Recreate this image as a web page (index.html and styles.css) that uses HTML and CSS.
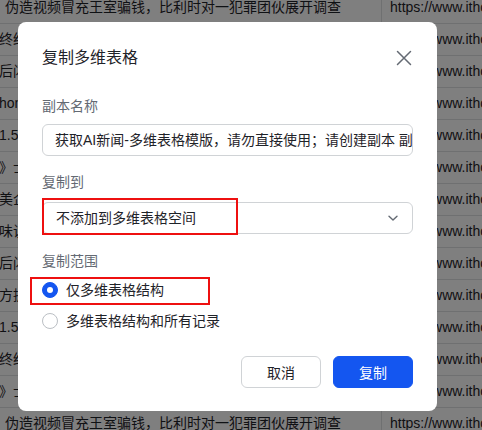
FILE: index.html
```html
<!DOCTYPE html>
<html lang="zh-CN">
<head>
    <meta charset="UTF-8">
    <meta name="viewport" content="width=device-width, initial-scale=1.0">
    <title>复制多维表格</title>
    <link rel="stylesheet" href="styles.css">
</head>
<body>
    <!-- Table behind the modal -->
    <div class="sheet">
        <div class="row"><div class="cell-title">伪造视频冒充王室骗钱，比利时对一犯罪团伙展开调查</div><div class="cell-link">https://www.ithome.com/0/812/331.htm</div></div>
        <div class="row"><div class="cell-title cut">终结者系列新作官宣定档</div><div class="cell-link">https://www.ithome.com/0/812/330.htm</div></div>
        <div class="row"><div class="cell-title cut">后闪存时代的存储技术</div><div class="cell-link">https://www.ithome.com/0/812/329.htm</div></div>
        <div class="row"><div class="cell-title cut">honor 新机发布会</div><div class="cell-link">https://www.ithome.com/0/812/328.htm</div></div>
        <div class="row"><div class="cell-title cut">1.5 亿元融资完成</div><div class="cell-link">https://www.ithome.com/0/812/327.htm</div></div>
        <div class="row"><div class="cell-title cut">》士兵突击重映</div><div class="cell-link">https://www.ithome.com/0/812/326.htm</div></div>
        <div class="row"><div class="cell-title cut">美企财报季来临</div><div class="cell-link">https://www.ithome.com/0/812/325.htm</div></div>
        <div class="row"><div class="cell-title cut">味说新品评测</div><div class="cell-link">https://www.ithome.com/0/812/324.htm</div></div>
        <div class="row"><div class="cell-title cut">后闪存时代的存储技术</div><div class="cell-link">https://www.ithome.com/0/812/323.htm</div></div>
        <div class="row"><div class="cell-title cut">方提出新方案</div><div class="cell-link">https://www.ithome.com/0/812/322.htm</div></div>
        <div class="row"><div class="cell-title cut">1.5 亿元融资完成</div><div class="cell-link">https://www.ithome.com/0/812/321.htm</div></div>
        <div class="row"><div class="cell-title cut">终结者系列新作官宣定档</div><div class="cell-link">https://www.ithome.com/0/812/320.htm</div></div>
        <div class="row"><div class="cell-title cut">》士兵突击重映</div><div class="cell-link">https://www.ithome.com/0/812/319.htm</div></div>
        <div class="row"><div class="cell-title">伪造视频冒充王室骗钱，比利时对一犯罪团伙展开调查</div><div class="cell-link">https://www.ithome.com/0/812/318.htm</div></div>
    </div>

    <div class="mask"></div>

    <!-- Copy dialog -->
    <div class="modal">
        <div class="modal-header">
            <h3 class="modal-title">复制多维表格</h3>
            <button class="modal-close" aria-label="关闭">
                <svg width="16" height="16" viewBox="0 0 16 16"><path d="M1.5 1.5 L14.5 14.5 M14.5 1.5 L1.5 14.5" stroke="#646a73" stroke-width="1.5" fill="none" stroke-linecap="round"/></svg>
            </button>
        </div>

        <div class="form-item">
            <div class="form-label">副本名称</div>
            <div class="input">获取AI新闻-多维表格模版，请勿直接使用；请创建副本 副本</div>
        </div>

        <div class="form-item form-item-to">
            <div class="form-label">复制到</div>
            <div class="select">
                <span>不添加到多维表格空间</span>
                <svg width="12" height="12" viewBox="0 0 12 12"><path d="M2 4.2 L6 8 L10 4.2" stroke="#646a73" stroke-width="1.4" fill="none" stroke-linecap="round" stroke-linejoin="round"/></svg>
                <div class="mark mark-select"></div>
            </div>
        </div>

        <div class="form-item form-item-range">
            <div class="form-label">复制范围</div>
            <div class="radios">
                <label class="radio">
                    <span class="radio-dot checked"></span>仅多维表格结构
                    <span class="mark mark-radio"></span>
                </label>
                <label class="radio">
                    <span class="radio-dot"></span>多维表格结构和所有记录
                </label>
            </div>
        </div>

        <div class="modal-footer">
            <button class="btn">取消</button>
            <button class="btn btn-primary">复制</button>
        </div>
    </div>
</body>
</html>
```

FILE: styles.css
```css
:root {
    --text: #1f2329;
    --text-caption: #646a73;
    --line: #dee0e3;
    --border: #d0d3d6;
    --primary: #1456f0;
    --mark: #ee1010;
}

* {
    box-sizing: border-box;
}

body {
    margin: 0;
    width: 482px;
    height: 430px;
    overflow: hidden;
    position: relative;
    font-family: "Liberation Sans", "Noto Sans CJK SC", sans-serif;
    color: var(--text);
    background: #fff;
}

/* Background sheet */
.sheet {
    margin-top: -8px;
}

.row {
    display: flex;
    height: 32px;
    border-bottom: 1px solid var(--line);
    font-size: 14px;
    line-height: 31px;
    white-space: nowrap;
}

.cell-title {
    width: 382px;
    flex-shrink: 0;
    padding-left: 5px;
    border-right: 1px solid var(--line);
    overflow: hidden;
}

.cell-title.cut {
    padding-left: 0;
    text-indent: -1px;
}

.cell-link {
    padding-left: 8px;
    overflow: hidden;
}

.mask {
    position: absolute;
    inset: 0;
    background: rgba(0, 0, 0, 0.5);
}

/* Dialog */
.modal {
    position: absolute;
    left: 18px;
    top: 22px;
    width: 419px;
    height: 389px;
    background: #fff;
    border-radius: 8px;
    padding: 24px 24px 23px;
    display: flex;
    flex-direction: column;
}

.modal-header {
    display: flex;
    align-items: center;
    justify-content: space-between;
    height: 24px;
}

.modal-title {
    margin: 0;
    font-size: 16px;
    font-weight: 400;
    line-height: 24px;
}

.modal-close {
    border: 0;
    padding: 0;
    margin-right: 1px;
    background: none;
    width: 16px;
    height: 16px;
    display: flex;
}

.form-item {
    margin-top: 25px;
}

.form-item-to {
    margin-top: 15px;
}

.form-item-range {
    margin-top: 16px;
}

.form-label {
    font-size: 14px;
    line-height: 22px;
    color: var(--text-caption);
    margin-bottom: 7px;
}

.form-item-to .form-label {
    margin-bottom: 9px;
}

.form-item-range .form-label {
    margin-bottom: 6px;
}

.input,
.select {
    height: 32px;
    border: 1px solid var(--border);
    border-radius: 6px;
    font-size: 14px;
    line-height: 30px;
    white-space: nowrap;
    overflow: hidden;
}

.input {
    padding: 0 6px 0 12px;
}

.select {
    position: relative;
    overflow: visible;
    display: flex;
    align-items: center;
    justify-content: space-between;
    padding: 0 13px 0 13px;
}

.radios {
    display: flex;
    flex-direction: column;
    gap: 7px;
}

.radio {
    position: relative;
    display: flex;
    align-items: center;
    gap: 8px;
    font-size: 14px;
    line-height: 24px;
}

.radio-dot {
    width: 16px;
    height: 16px;
    border-radius: 50%;
    border: 1px solid #bbbfc4;
    background: #fff;
    display: flex;
    align-items: center;
    justify-content: center;
}

.radio-dot.checked {
    border-color: var(--primary);
    background: var(--primary);
}

.radio-dot.checked::after {
    content: '';
    width: 6px;
    height: 6px;
    border-radius: 50%;
    background: #fff;
}

/* Red annotation boxes */
.mark {
    position: absolute;
    border: 2px solid var(--mark);
    pointer-events: none;
}

.mark-select {
    left: -1px;
    top: -5px;
    width: 196px;
    height: 37px;
}

.mark-radio {
    left: -12px;
    top: -1px;
    width: 180px;
    height: 28px;
}

.modal-footer {
    margin-top: auto;
    display: flex;
    justify-content: flex-end;
    gap: 12px;
}

.btn {
    width: 80px;
    height: 32px;
    border: 1px solid var(--border);
    border-radius: 6px;
    background: #fff;
    color: var(--text);
    font-family: inherit;
    font-size: 14px;
    padding: 0;
}

.btn-primary {
    background: var(--primary);
    border-color: var(--primary);
    color: #fff;
}
```
